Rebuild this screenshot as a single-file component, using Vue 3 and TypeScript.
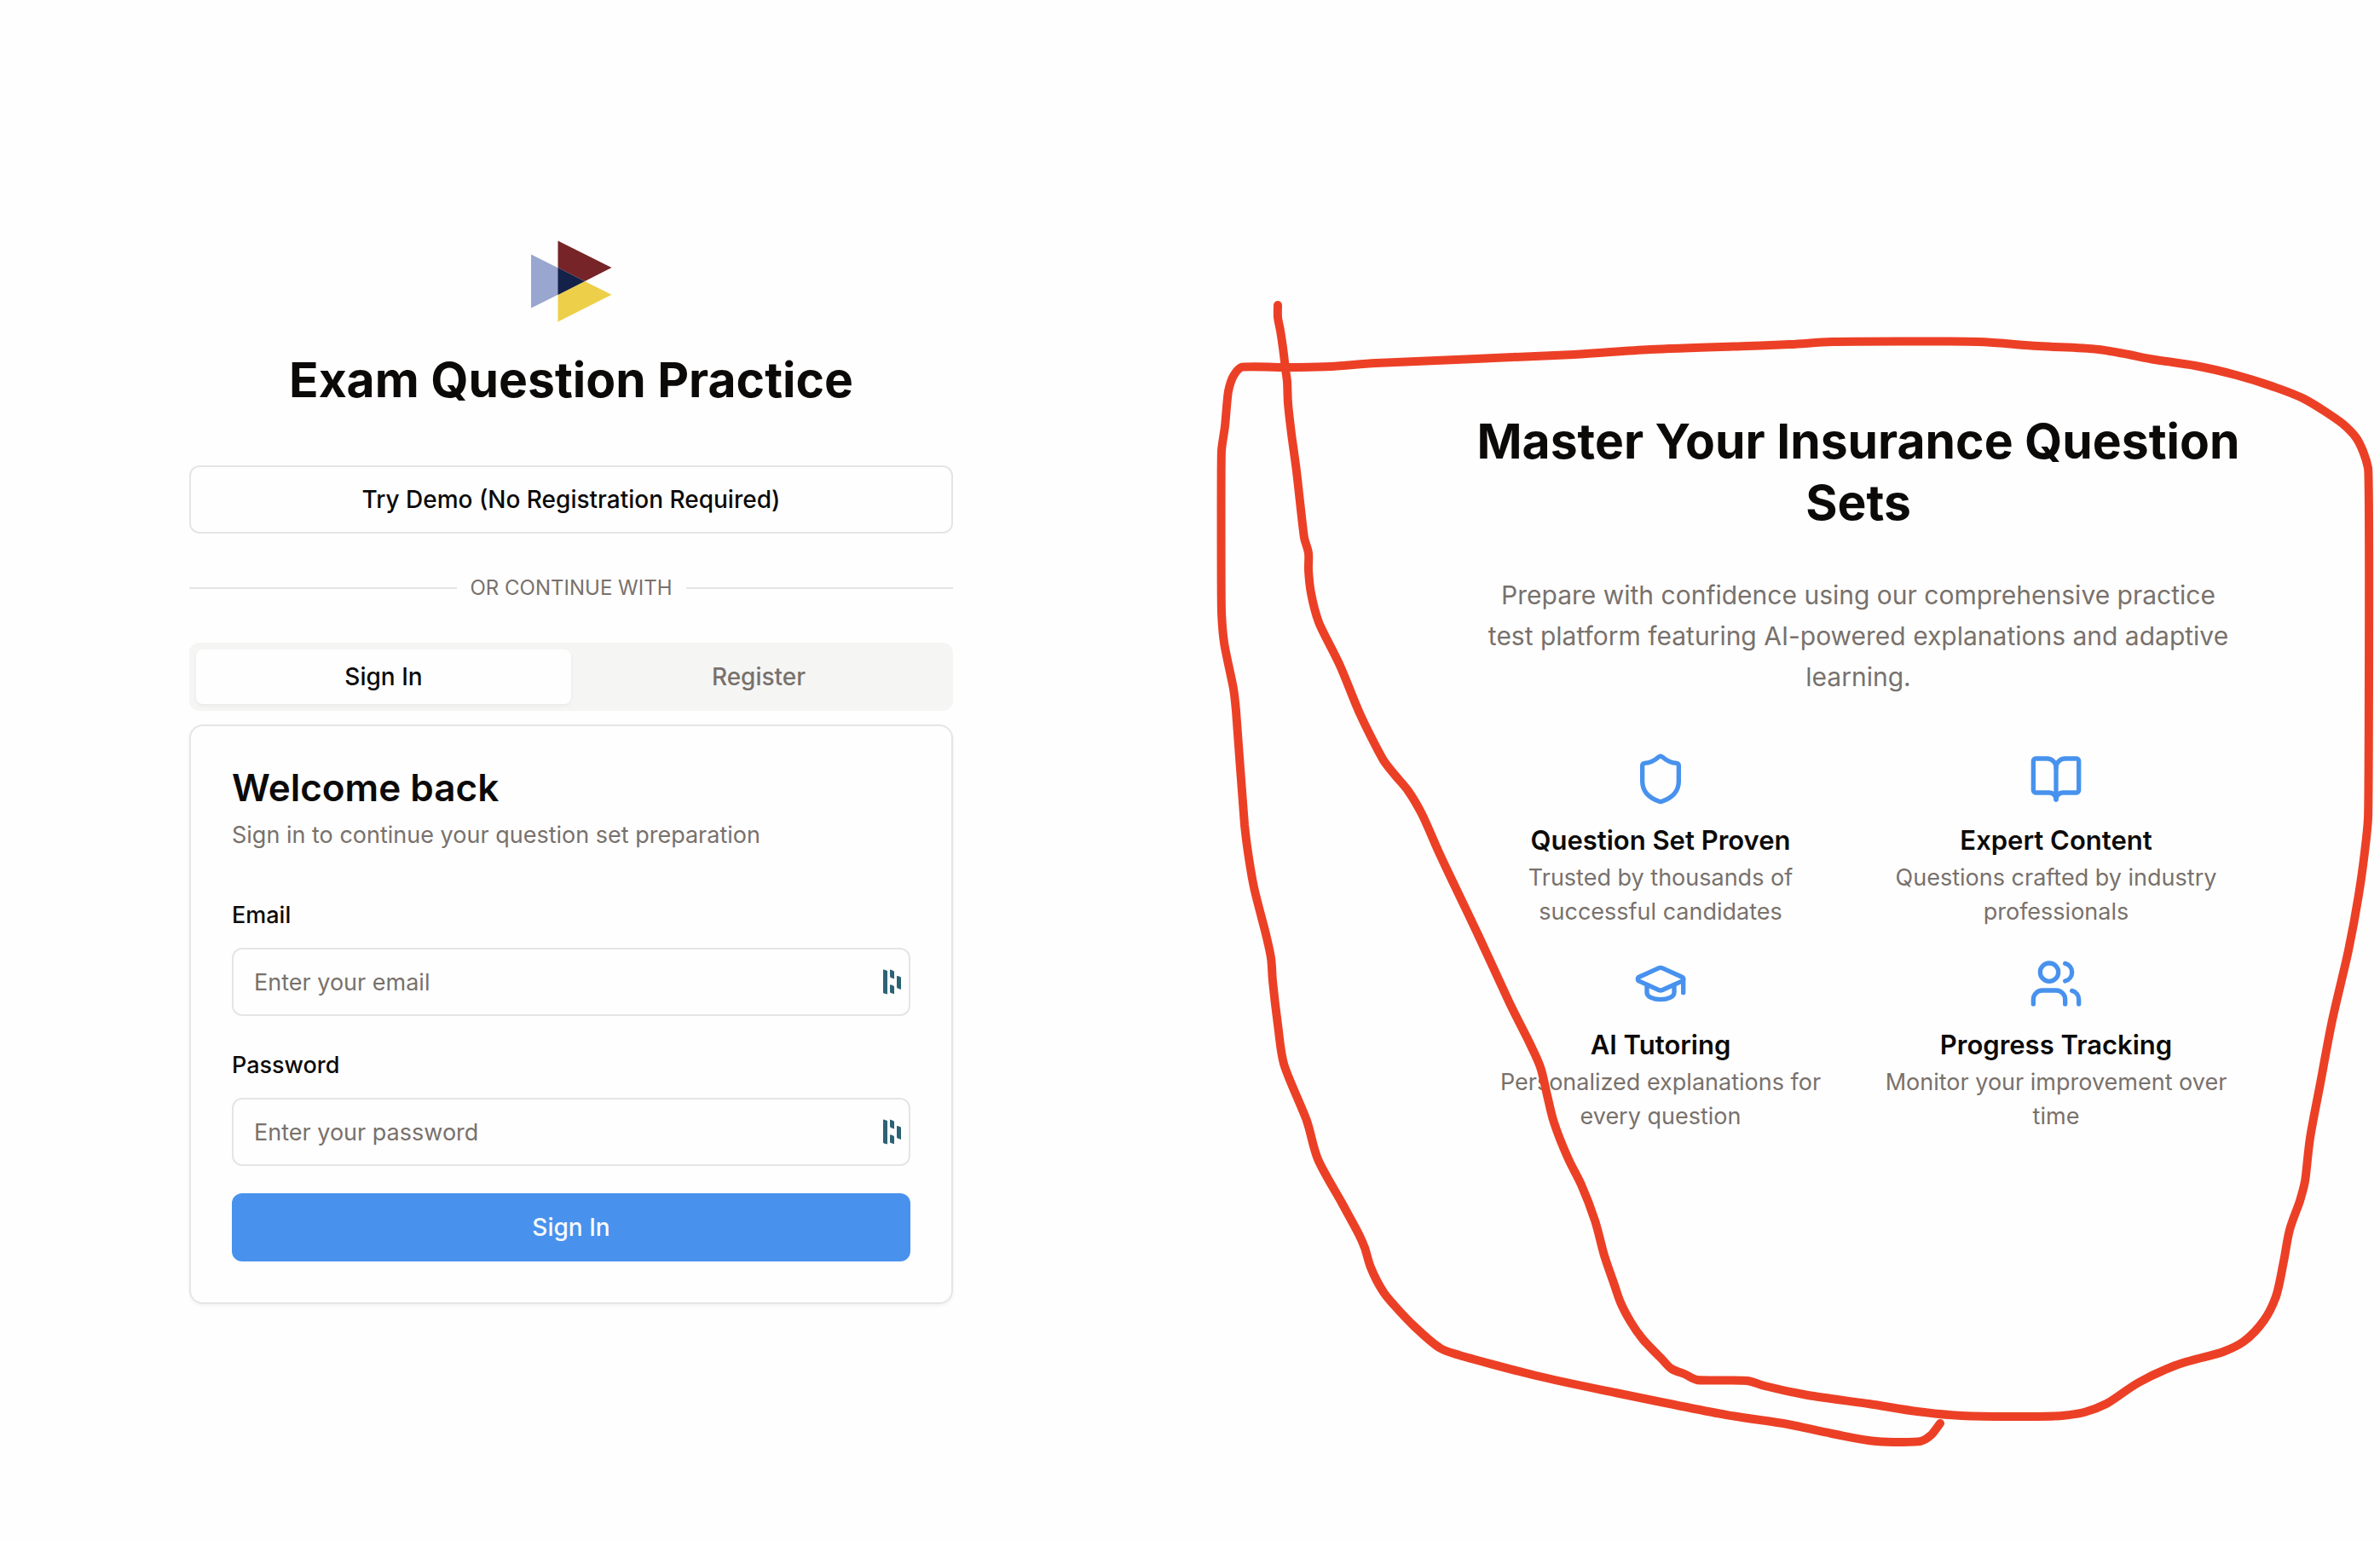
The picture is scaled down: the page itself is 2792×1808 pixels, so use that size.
<script setup lang="ts">
import { computed, ref } from 'vue'

type Point = [number, number]

interface Feature {
  title: string
  text: string
  paths: string[]
  circle?: { cx: number; cy: number; r: number }
}

const tab = ref<'signin' | 'register'>('signin')
const email = ref('')
const password = ref('')

const features: Feature[] = [
  {
    title: 'Question Set Proven',
    text: 'Trusted by thousands of successful candidates',
    paths: [
      'M20 13c0 5-3.5 7.5-7.66 8.95a1 1 0 0 1-.67-.01C7.5 20.5 4 18 4 13V6a1 1 0 0 1 1-1c2 0 4.5-1.2 6.24-2.72a1.17 1.17 0 0 1 1.52 0C14.51 3.81 17 5 19 5a1 1 0 0 1 1 1z',
    ],
  },
  {
    title: 'Expert Content',
    text: 'Questions crafted by industry professionals',
    paths: [
      'M12 7v14',
      'M3 18a1 1 0 0 1-1-1V4a1 1 0 0 1 1-1h5a4 4 0 0 1 4 4 4 4 0 0 1 4-4h5a1 1 0 0 1 1 1v13a1 1 0 0 1-1 1h-6a3 3 0 0 0-3 3 3 3 0 0 0-3-3z',
    ],
  },
  {
    title: 'AI Tutoring',
    text: 'Personalized explanations for every question',
    paths: [
      'M21.42 10.922a1 1 0 0 0-.019-1.838L12.83 5.18a2 2 0 0 0-1.66 0L2.6 9.08a1 1 0 0 0 0 1.832l8.57 3.908a2 2 0 0 0 1.66 0z',
      'M22 10v6',
      'M6 12.5V16a6 3 0 0 0 12 0v-3.5',
    ],
  },
  {
    title: 'Progress Tracking',
    text: 'Monitor your improvement over time',
    paths: [
      'M16 21v-2a4 4 0 0 0-4-4H6a4 4 0 0 0-4 4v2',
      'M22 21v-2a4 4 0 0 0-3-3.87',
      'M16 3.13a4 4 0 0 1 0 7.75',
    ],
    circle: { cx: 9, cy: 7, r: 4 },
  },
]

// Freehand marker line, in drawing order
const marker: Point[] = [
  [1499, 358], [1499, 372], [1502, 388], [1505, 408], [1508, 433], [1510, 448], [1511, 473],
  [1515, 509], [1521, 553], [1530, 631], [1535, 649], [1535, 669], [1538, 696], [1547, 730],
  [1572, 781], [1596, 839], [1623, 892], [1637, 910], [1652, 928], [1668, 955], [1688, 1000],
  [1704, 1034], [1735, 1099], [1771, 1177], [1795, 1225], [1807, 1252], [1815, 1285], [1823, 1317],
  [1840, 1360], [1855, 1390], [1871, 1432], [1882, 1473], [1893, 1505], [1901, 1528], [1913, 1551],
  [1927, 1571], [1949, 1594], [1961, 1606], [1976, 1612], [1991, 1619], [2050, 1620], [2070, 1626],
  [2121, 1637], [2192, 1647], [2249, 1656], [2301, 1661], [2381, 1662], [2419, 1661], [2445, 1657],
  [2471, 1647], [2509, 1622], [2552, 1602], [2575, 1595], [2608, 1586], [2632, 1574], [2656, 1549],
  [2670, 1521], [2679, 1480], [2686, 1443], [2698, 1409], [2704, 1386], [2710, 1335], [2722, 1271],
  [2736, 1197], [2755, 1115], [2767, 1050], [2774, 1000], [2778, 960], [2778, 549], [2765, 515],
  [2748, 497], [2703, 468], [2665, 453], [2623, 440], [2575, 429], [2528, 422], [2462, 410],
  [2391, 406], [2320, 401], [2149, 401], [2100, 404], [2050, 406], [1936, 410], [1846, 416],
  [1614, 426], [1561, 430], [1516, 431], [1456, 431], [1447, 441], [1441, 459], [1437, 500],
  [1433, 529], [1433, 718], [1436, 754], [1447, 808], [1450, 834], [1460, 968], [1464, 1000],
  [1471, 1041], [1485, 1096], [1491, 1124], [1493, 1151], [1499, 1202], [1506, 1248], [1533, 1315],
  [1546, 1360], [1574, 1411], [1594, 1448], [1601, 1464], [1608, 1487], [1623, 1516], [1637, 1533],
  [1659, 1556], [1690, 1582], [1712, 1590], [1802, 1614], [1895, 1634], [2025, 1660], [2097, 1671],
  [2149, 1682], [2201, 1691], [2253, 1691], [2265, 1684], [2276, 1670],
]

function unit(a: Point, b: Point): { x: number; y: number; len: number } {
  const len = Math.hypot(b[0] - a[0], b[1] - a[1])
  return { x: (b[0] - a[0]) / len, y: (b[1] - a[1]) / len, len }
}

// Joins the points with cubic curves. Each handle bisects the two segments that meet at its
// point and is no longer than a third of the shorter one, so long straight runs stay straight.
const markerPath = computed(() => {
  const last = marker.length - 1
  const handles = marker.map((p, i) => {
    const a = unit(marker[Math.max(i - 1, 0)], marker[Math.max(i, 1)])
    const b = unit(marker[Math.min(i, last - 1)], marker[Math.min(i + 1, last)])
    const x = a.x + b.x
    const y = a.y + b.y
    const k = Math.min(a.len, b.len) / 3 / Math.hypot(x, y)
    return { x: x * k, y: y * k }
  })
  let d = `M${marker[0][0]} ${marker[0][1]}`
  for (let i = 0; i < last; i++) {
    const p = marker[i]
    const q = marker[i + 1]
    const c1 = `${(p[0] + handles[i].x).toFixed(1)} ${(p[1] + handles[i].y).toFixed(1)}`
    const c2 = `${(q[0] - handles[i + 1].x).toFixed(1)} ${(q[1] - handles[i + 1].y).toFixed(1)}`
    d += `C${c1} ${c2} ${q[0]} ${q[1]}`
  }
  return d
})
</script>

<template>
  <main class="page">
    <section class="auth">
      <div class="auth-inner">
        <header class="brand">
          <svg class="logo" viewBox="0 0 96 96" aria-hidden="true">
            <path d="M1 16.5 33 32.5V63.5L1 79.5z" fill="#98a6d0" />
            <path d="M32.5.5 95.5 32 64 48 32.5 32z" fill="#762428" />
            <path d="M32.5 64 64 48 95.5 63.7 32.5 95.5z" fill="#eecf49" />
            <path d="M32.5 32 64 48 32.5 64z" fill="#142148" />
          </svg>
          <h1 class="heading">Exam Question Practice</h1>
        </header>

        <button type="button" class="btn btn-outline">Try Demo (No Registration Required)</button>

        <div class="divider"><span>Or continue with</span></div>

        <div class="tabs" role="tablist">
          <button
            type="button"
            role="tab"
            class="tab"
            :class="{ active: tab === 'signin' }"
            :aria-selected="tab === 'signin'"
            @click="tab = 'signin'"
          >
            Sign In
          </button>
          <button
            type="button"
            role="tab"
            class="tab"
            :class="{ active: tab === 'register' }"
            :aria-selected="tab === 'register'"
            @click="tab = 'register'"
          >
            Register
          </button>
        </div>

        <div class="card">
          <h2 class="card-title">Welcome back</h2>
          <p class="card-text">Sign in to continue your question set preparation</p>
          <form class="form" @submit.prevent>
            <div class="field">
              <label for="email">Email</label>
              <div class="control">
                <input id="email" v-model="email" type="email" placeholder="Enter your email" />
                <svg class="fill-icon" viewBox="0 0 22 30" aria-hidden="true">
                  <path d="M0 1.2Q0 .2 1 .5L5 2V29.6L1 28.6Q0 28.2 0 27.6z" />
                  <path d="M8 1.2Q8 .4 9 .7L12 2Q13 2.4 13 3.4V11.4L9 10Q8 9.6 8 8.6z" />
                  <path d="M8 19.2Q8 18 9 18.3L12 19.4Q13 19.8 13 20.8V29.2L9 28Q8 27.6 8 26.8z" />
                  <path d="M16 8.6Q16 7.6 17 8L20 9Q21 9.4 21 10.4V24L17 22.6Q16 22.2 16 21.2z" />
                </svg>
              </div>
            </div>
            <div class="field">
              <label for="password">Password</label>
              <div class="control">
                <input id="password" v-model="password" type="password" placeholder="Enter your password" />
                <svg class="fill-icon" viewBox="0 0 22 30" aria-hidden="true">
                  <path d="M0 1.2Q0 .2 1 .5L5 2V29.6L1 28.6Q0 28.2 0 27.6z" />
                  <path d="M8 1.2Q8 .4 9 .7L12 2Q13 2.4 13 3.4V11.4L9 10Q8 9.6 8 8.6z" />
                  <path d="M8 19.2Q8 18 9 18.3L12 19.4Q13 19.8 13 20.8V29.2L9 28Q8 27.6 8 26.8z" />
                  <path d="M16 8.6Q16 7.6 17 8L20 9Q21 9.4 21 10.4V24L17 22.6Q16 22.2 16 21.2z" />
                </svg>
              </div>
            </div>
            <button type="submit" class="btn btn-primary">Sign In</button>
          </form>
        </div>
      </div>
    </section>

    <section class="promo">
      <div class="promo-inner">
        <h2 class="heading">Master Your Insurance Question Sets</h2>
        <p class="lead">
          Prepare with confidence using our comprehensive practice test platform featuring AI-powered
          explanations and adaptive learning.
        </p>
        <ul class="features">
          <li v-for="feature in features" :key="feature.title" class="feature">
            <svg class="feature-icon" viewBox="0 0 24 24" aria-hidden="true">
              <path v-for="d in feature.paths" :key="d" :d="d" />
              <circle v-if="feature.circle" v-bind="feature.circle" />
            </svg>
            <h3>{{ feature.title }}</h3>
            <p>{{ feature.text }}</p>
          </li>
        </ul>
      </div>
    </section>

    <svg class="marker" viewBox="0 0 2792 1808" aria-hidden="true">
      <path :d="markerPath" />
    </svg>
  </main>
</template>

<style>
body {
  background: #fefefe;
}
</style>

<style scoped>
.page {
  position: relative;
  display: grid;
  grid-template-columns: 1fr 1fr;
  align-items: center;
  min-height: 100vh;
  padding-top: 4px;
  box-sizing: border-box;
  background: #fefefe;
  color: #0c0a09;
  font-family: Inter, 'Liberation Sans', sans-serif;
  font-size: 27px;
  line-height: 40px;
}

h1,
h2,
h3,
p,
ul {
  margin: 0;
  padding: 0;
}

button,
input {
  font: inherit;
  color: inherit;
  box-sizing: border-box;
}

.auth {
  display: flex;
  justify-content: center;
  padding-right: 56px;
}

.promo {
  display: flex;
  justify-content: center;
  padding-left: 172px;
}

.auth-inner,
.promo-inner {
  width: 100%;
  max-width: 896px;
}

.brand {
  display: flex;
  flex-direction: column;
  align-items: center;
  gap: 32px;
  margin-bottom: 64px;
}

.logo {
  width: 96px;
  height: 96px;
}

.heading {
  margin: 0 -8px;
  font-size: 57px;
  line-height: 72px;
  font-weight: 700;
  text-align: center;
}

.btn {
  display: block;
  width: 100%;
  height: 80px;
  border-radius: 12px;
  font-size: 28px;
  font-weight: 500;
  cursor: pointer;
}

.btn-outline {
  border: 2px solid #e5e5e5;
  background: #fefefe;
}

.btn-primary {
  border: 0;
  background: #4892ee;
  color: #fafafa;
}

.divider {
  display: flex;
  align-items: center;
  gap: 16px;
  margin: 48px 0;
  font-size: 24px;
  line-height: 32px;
  color: #78716c;
  text-transform: uppercase;
}

.divider::before,
.divider::after {
  content: '';
  flex: 1;
  height: 2px;
  background: #e5e5e5;
}

.tabs {
  display: grid;
  grid-template-columns: 1fr 1fr;
  padding: 8px;
  border-radius: 12px;
  background: #f5f5f4;
}

.tab {
  height: 64px;
  border: 0;
  border-radius: 8px;
  background: transparent;
  color: #78716c;
  font-size: 28px;
  font-weight: 500;
  cursor: pointer;
}

.tab.active {
  background: #fefefe;
  color: #0c0a09;
  box-shadow: 0 2px 4px rgba(0, 0, 0, 0.05);
}

.card {
  margin-top: 16px;
  padding: 48px;
  border: 2px solid #e5e5e5;
  border-radius: 16px;
  box-shadow: 0 2px 4px rgba(0, 0, 0, 0.05);
}

.card-title {
  font-size: 44px;
  line-height: 48px;
  font-weight: 600;
}

.card-text {
  margin-top: 12px;
  color: #78716c;
}

.form {
  display: flex;
  flex-direction: column;
  gap: 32px;
  margin-top: 48px;
}

.field {
  display: flex;
  flex-direction: column;
  gap: 12px;
}

.field label {
  line-height: 52px;
  font-weight: 500;
}

.control {
  position: relative;
}

.control input {
  display: block;
  width: 100%;
  height: 80px;
  padding: 0 24px;
  border: 2px solid #e5e5e5;
  border-radius: 12px;
  background: #fefefe;
  outline: none;
}

.control input::placeholder {
  color: #78716c;
  opacity: 1;
}

.fill-icon {
  position: absolute;
  top: 25px;
  right: 10px;
  width: 22px;
  height: 30px;
  fill: #2c6374;
}

.lead {
  margin: 48px 0 64px;
  font-size: 30px;
  line-height: 48px;
  color: #78716c;
  text-align: center;
}

.features {
  display: grid;
  grid-template-columns: 1fr 1fr;
  gap: 32px;
  list-style: none;
}

.feature {
  text-align: center;
  color: #78716c;
}

.feature-icon {
  display: block;
  width: 64px;
  height: 64px;
  margin: 0 auto 16px;
  fill: none;
  stroke: #4892ee;
  stroke-width: 2;
  stroke-linecap: round;
  stroke-linejoin: round;
}

.feature h3 {
  font-size: 31px;
  line-height: 48px;
  font-weight: 600;
  color: #0c0a09;
}

.marker {
  position: absolute;
  inset: 0;
  width: 100%;
  height: 100%;
  pointer-events: none;
  fill: none;
  stroke: #ec4026;
  stroke-width: 10;
  stroke-linecap: round;
  stroke-linejoin: round;
}
</style>
